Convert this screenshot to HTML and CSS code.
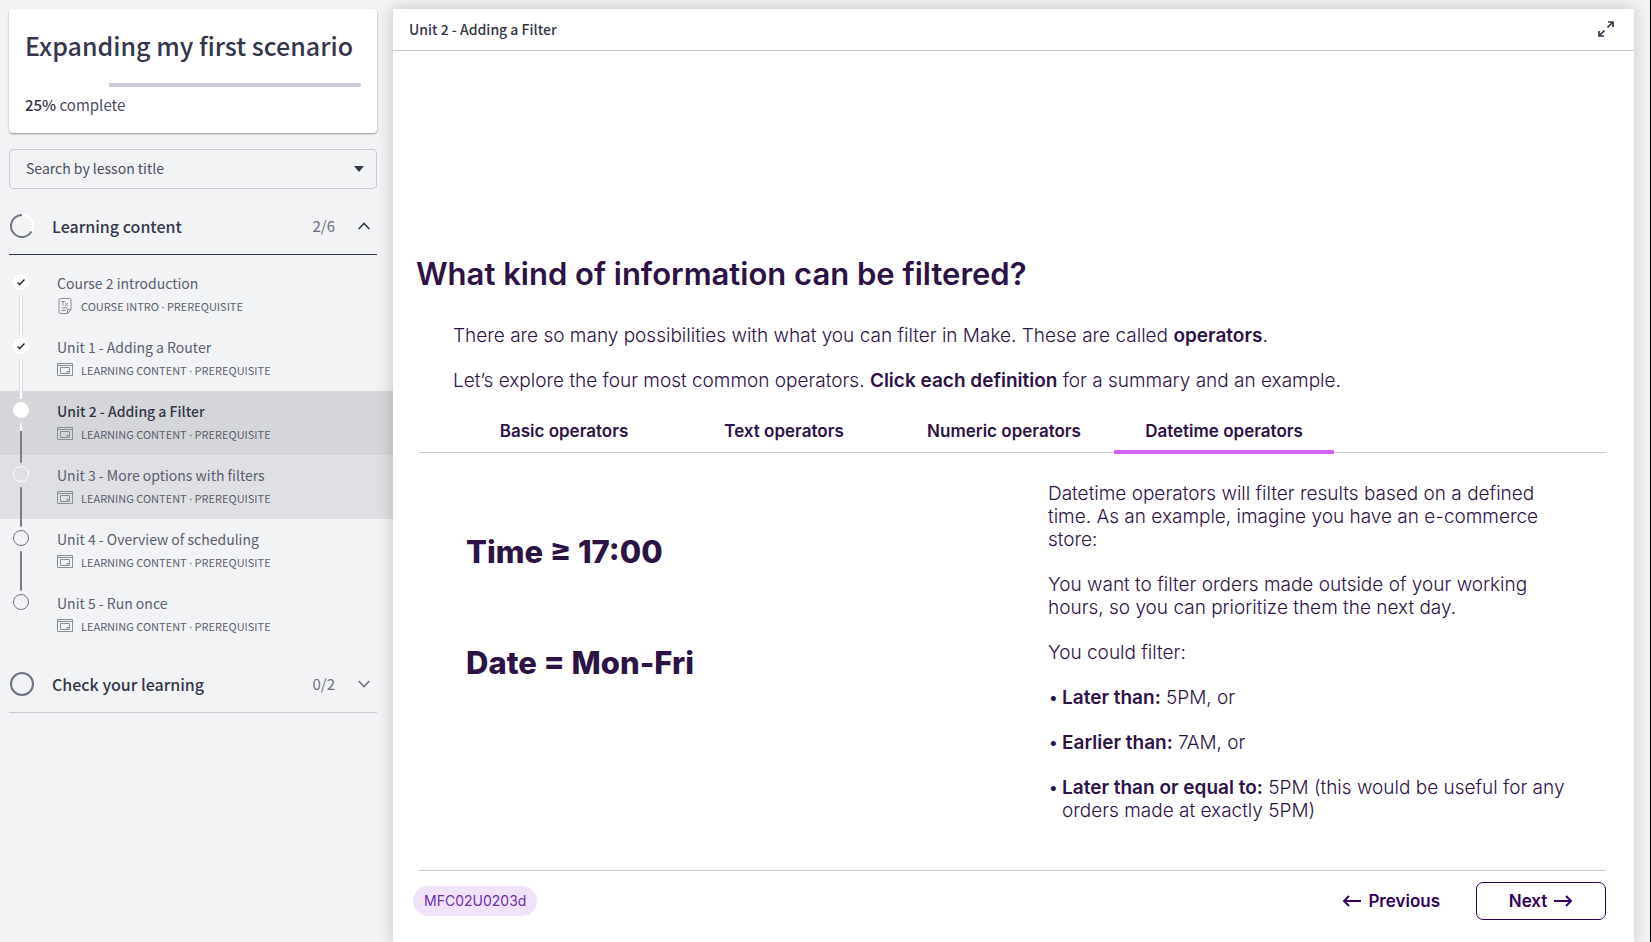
FILE: index.html
```html
<!DOCTYPE html>
<html lang="en">
<head>
<meta charset="utf-8">
<meta name="viewport" content="width=device-width, initial-scale=1">
<title>Expanding my first scenario</title>
<link rel="stylesheet" href="styles.css">
</head>
<body>
<svg class="sprite" aria-hidden="true">
  <symbol id="i-window" viewBox="0 0 16 16"><path d="M.5 1.500h15v12H.5zM.5 3.500h15M3.500 5.500h9v6h-9zM12.500 9.500h-2.500v2" fill="none" stroke="currentColor"/></symbol>
  <symbol id="i-check" viewBox="0 0 10 10"><path d="M1.500 5.500 3.700 7.500 8.500 2.500" fill="none" stroke="currentColor" stroke-width="1.400"/></symbol>
</svg>
<div class="page">
  <aside class="sidebar">
    <section class="card">
      <h1 class="card-title">Expanding my first scenario</h1>
      <div class="progress" role="progressbar" aria-valuenow="25" aria-valuemin="0" aria-valuemax="100" aria-label="Course progress"><div class="progress-done" style="width:25%"></div></div>
      <p class="card-status"><strong>25%</strong> complete</p>
    </section>

    <div class="search">
      <select class="search-select" aria-label="Search by lesson title"><option>Search by lesson title</option></select>
      <svg class="search-arrow" viewBox="0 0 10 6" aria-hidden="true"><path d="M0 0h10L5 6z" fill="currentColor"/></svg>
    </div>

    <button class="section section-open" type="button" aria-expanded="true">
      <svg class="section-ring" viewBox="0 0 24 24" aria-hidden="true"><circle cx="12" cy="12" r="11" fill="none" stroke="#fff" stroke-width="2"/><path d="M12 1A11 11 0 1 0 21.500 17.500" fill="none" stroke="#6f7083" stroke-width="2"/></svg>
      <span class="section-name">Learning content</span>
      <span class="section-count">2/6</span>
      <svg class="section-chevron" viewBox="0 0 12 8" aria-hidden="true"><path d="M.7 7 6 1.500 11.300 7" fill="none" stroke="currentColor" stroke-width="1.600"/></svg>
    </button>

    <ul class="lessons">
      <li><a class="lesson lesson-done" href="#">
        <span class="rail"><span class="dot"><svg class="tick"><use href="#i-check"/></svg></span><span class="link"></span></span>
        <span class="lesson-body"><span class="lesson-title">Course 2 introduction</span>
        <span class="lesson-meta"><svg class="meta-icon" viewBox="0 0 16 16" aria-hidden="true"><path d="M3.500.5h9a1.500 1.500 0 0 1 1.500 1.500v9.500l-3.500 4H3.500A1.500 1.500 0 0 1 2 14V2A1.500 1.500 0 0 1 3.500.5zM14 11.500h-3.500v4M4 3.500h4M6 3.500v4M8 5l3 3M11 5 8 8M4.500 10h6M4.500 12.500h4" fill="none" stroke="currentColor"/></svg><span>COURSE INTRO <span class="sep">·</span> PREREQUISITE</span></span></span>
      </a></li>
      <li><a class="lesson lesson-done" href="#">
        <span class="rail"><span class="dot"><svg class="tick"><use href="#i-check"/></svg></span><span class="link"></span></span>
        <span class="lesson-body"><span class="lesson-title">Unit 1 - Adding a Router</span>
        <span class="lesson-meta"><svg class="meta-icon"><use href="#i-window"/></svg><span>LEARNING CONTENT <span class="sep">·</span> PREREQUISITE</span></span></span>
      </a></li>
      <li><a class="lesson lesson-current" href="#" aria-current="page">
        <span class="rail"><span class="dot"></span><span class="link link-started"></span></span>
        <span class="lesson-body"><span class="lesson-title">Unit 2 - Adding a Filter</span>
        <span class="lesson-meta"><svg class="meta-icon"><use href="#i-window"/></svg><span>LEARNING CONTENT <span class="sep">·</span> PREREQUISITE</span></span></span>
      </a></li>
      <li><a class="lesson lesson-hover" href="#">
        <span class="rail"><span class="dot"></span><span class="link"></span></span>
        <span class="lesson-body"><span class="lesson-title">Unit 3 - More options with filters</span>
        <span class="lesson-meta"><svg class="meta-icon"><use href="#i-window"/></svg><span>LEARNING CONTENT <span class="sep">·</span> PREREQUISITE</span></span></span>
      </a></li>
      <li><a class="lesson" href="#">
        <span class="rail"><span class="dot"></span><span class="link"></span></span>
        <span class="lesson-body"><span class="lesson-title">Unit 4 - Overview of scheduling</span>
        <span class="lesson-meta"><svg class="meta-icon"><use href="#i-window"/></svg><span>LEARNING CONTENT <span class="sep">·</span> PREREQUISITE</span></span></span>
      </a></li>
      <li><a class="lesson" href="#">
        <span class="rail"><span class="dot"></span></span>
        <span class="lesson-body"><span class="lesson-title">Unit 5 - Run once</span>
        <span class="lesson-meta"><svg class="meta-icon"><use href="#i-window"/></svg><span>LEARNING CONTENT <span class="sep">·</span> PREREQUISITE</span></span></span>
      </a></li>
    </ul>

    <button class="section" type="button" aria-expanded="false">
      <svg class="section-ring" viewBox="0 0 24 24" aria-hidden="true"><circle cx="12" cy="12" r="11" fill="none" stroke="#6f7083" stroke-width="2"/></svg>
      <span class="section-name">Check your learning</span>
      <span class="section-count">0/2</span>
      <svg class="section-chevron" viewBox="0 0 12 8" aria-hidden="true"><path d="M.7 1 6 6.500 11.300 1" fill="none" stroke="#6f7083" stroke-width="1.600"/></svg>
    </button>
  </aside>

  <main class="viewer">
    <header class="viewer-bar">
      <span class="viewer-name">Unit 2 - Adding a Filter</span>
      <button class="expand" type="button" aria-label="Full screen"><svg class="expand-icon" viewBox="0 0 16 16" aria-hidden="true"><path d="M9.500 6.500 15 1M10 1h5v5M6.500 9.500 1 15M1 10v5h5" fill="none" stroke="currentColor" stroke-width="1.700"/></svg></button>
    </header>
    <article class="slide">
      <h2 class="slide-title">What kind of information can be filtered?</h2>
      <div class="intro">
        <p>There are so many possibilities with what you can filter in Make. These are called <strong>operators</strong>.</p>
        <p>Let’s explore the four most common operators. <strong>Click each definition</strong> for a summary and an example.</p>
      </div>
      <div class="tabs" role="tablist">
        <button class="tab" role="tab" type="button" aria-selected="false">Basic operators</button>
        <button class="tab" role="tab" type="button" aria-selected="false">Text operators</button>
        <button class="tab" role="tab" type="button" aria-selected="false">Numeric operators</button>
        <button class="tab tab-active" role="tab" type="button" aria-selected="true">Datetime operators</button>
      </div>
      <div class="panel" role="tabpanel">
        <div class="formulas">
          <p>Time ≥ 17:00</p>
          <p>Date = Mon-Fri</p>
        </div>
        <div class="explain">
          <p>Datetime operators will filter results based on a defined time. As an example, imagine you have an e-commerce store:</p>
          <p>You want to filter orders made outside of your working hours, so you can prioritize them the next day.</p>
          <p>You could filter:</p>
          <ul class="bullets">
            <li><p><strong>Later than:</strong> 5PM, or</p></li>
            <li><p><strong>Earlier than:</strong> 7AM, or</p></li>
            <li><p><strong>Later than or equal to:</strong> 5PM (this would be useful for any orders made at exactly 5PM)</p></li>
          </ul>
        </div>
      </div>
      <footer class="slide-foot">
        <span class="code">MFC02U0203d</span>
        <button class="nav-button" type="button"><svg class="arrow" viewBox="0 0 20 12" aria-hidden="true"><path d="M19 6H2M7 1 2 6l5 5" fill="none" stroke="currentColor" stroke-width="1.900"/></svg>Previous</button>
        <button class="nav-button nav-next" type="button">Next<svg class="arrow" viewBox="0 0 20 12" aria-hidden="true"><path d="M1 6h17M13 1l5 5-5 5" fill="none" stroke="currentColor" stroke-width="1.900"/></svg></button>
      </footer>
    </article>
  </main>
</div>
</body>
</html>
```
FILE: styles.css
```css
:root {
  --ink: #34364a;
  --muted: #6f7083;
  --line: #c9cad8;
  --plum: #2d1246;
  --rule: #d3c9c9;
  --ui: "Source Sans Pro", "Noto Sans CJK SC", "Noto Sans", sans-serif;
}
* { box-sizing: border-box; }
body {
  margin: 0;
  background: #f1f3f5;
  border-right: 1px solid #000;
  color: var(--ink);
  font-family: var(--ui);
}
p, h1, h2, ul { margin: 0; padding: 0; }
ul { list-style: none; }
button { background: none; border: 0; padding: 0; color: inherit; cursor: pointer; }
.sprite { display: none; }
.page {
  display: grid;
  grid-template-columns: 393px minmax(0, 1fr);
  min-height: 100vh;
  padding-right: 16px;
}

/* Sidebar */
.sidebar { padding-top: 9px; }
.card {
  margin: 0 16px 16px 9px;
  padding: 18px 16px 17px;
  background: #fff;
  border-radius: 4px;
  box-shadow: 0 1px 2px rgba(0, 0, 0, .4);
}
.card-title { font-size: 25px; font-weight: 500; line-height: 36px; white-space: nowrap; }
.progress { height: 4px; margin: 20px 0 7px; background: var(--line); border-radius: 2px; }
.progress-done { height: 100%; background: #fff; }
.card-status { color: #4b4d60; font-size: 15px; line-height: 22px; }
.card-status strong { color: var(--ink); font-weight: 500; }
.search { position: relative; margin: 0 16px 16px 9px; }
.search-select {
  display: block;
  appearance: none;
  width: 100%;
  height: 40px;
  padding: 0 16px 2px;
  background: transparent;
  border: 1px solid var(--line);
  border-radius: 4px;
  color: #4b4d60;
  font-family: var(--ui);
  font-size: 14px;
}
.search-arrow { position: absolute; top: 17px; right: 13px; width: 10px; height: 6px; }
.section {
  display: flex;
  align-items: center;
  width: calc(100% - 25px);
  height: 50px;
  margin-left: 9px;
  padding: 0 7px 8px 1px;
  border-bottom: 1px solid var(--line);
  font-family: var(--ui);
  font-size: 16px;
  font-weight: 500;
}
.section-open { border-bottom-color: var(--ink); }
.section-ring { width: 24px; height: 24px; margin-right: 18px; }
.section-name { flex: 1; text-align: left; }
.section-count { margin-right: 23px; color: var(--muted); font-size: 15px; font-weight: 400; }
.section-chevron { width: 12px; height: 8px; }
.lessons { padding: 8px 0 16px; }
.lesson {
  display: flex;
  height: 64px;
  padding: 0 16px 0 13px;
  color: #5b5d70;
  text-decoration: none;
}
.lesson-current { background: #d5d6da; }
.lesson-current .lesson-title { color: var(--ink); font-weight: 500; }
.lesson-hover { background: #dfe0e4; }
.rail { display: flex; flex-direction: column; align-items: center; gap: 5px; width: 16px; margin-right: 28px; padding-top: 11px; }
.dot { display: flex; flex: none; align-items: center; justify-content: center; width: 16px; height: 16px; border: 1px solid var(--muted); border-radius: 50%; }
.lesson-done .dot, .lesson-current .dot { background: #fff; border-color: #fff; color: #222; }
.lesson-hover .dot { border-color: #fff; }
.tick { width: 10px; height: 10px; }
.link { position: relative; flex: none; width: 2px; height: 40px; background: #7b7c8e; border-radius: 1px; }
.lesson-done .link { width: 4px; background: #fff; border: solid #d9dade; border-width: 0 1px; }
.link-started { background: linear-gradient(#fff 8px, #7b7c8e 8px); }
.lesson-body { display: flex; flex-direction: column; padding-top: 8px; }
.lesson-title { font-size: 14px; line-height: 24px; white-space: nowrap; }
.lesson-meta { display: flex; align-items: center; gap: 8px; font-size: 11px; line-height: 22px; white-space: nowrap; }
.sep { font-family: "Noto Sans", sans-serif; line-height: 1; }
.meta-icon { width: 16px; height: 16px; color: #8b8c9c; }

/* Viewer */
.viewer {
  display: flex;
  flex-direction: column;
  position: relative;
  margin-top: 9px;
  background: #fff;
  box-shadow: 0 0 16px rgba(0, 0, 0, .2);
}
.viewer-bar {
  display: flex;
  align-items: center;
  justify-content: space-between;
  height: 42px;
  padding: 0 20px 2px 16px;
  border-bottom: 1px solid var(--line);
}
.viewer-name { font-size: 14px; font-weight: 500; }
.expand-icon { display: block; width: 16px; height: 16px; }
.slide {
  display: flex;
  flex: 1;
  flex-direction: column;
  padding: 203px 28px 20px 26px;
  color: var(--plum);
  font-family: Inter, "Liberation Sans", sans-serif;
}
.slide-title { margin-left: -3px; font-size: 31px; font-weight: 600; line-height: 40px; }
.intro { display: grid; gap: 22px; padding: 30px 0 0 34px; font-size: 19px; line-height: 23px; font-weight: 300; }
.slide strong { font-weight: 600; }
.tabs { display: flex; margin-top: 18px; padding-left: 35px; border-bottom: 1px solid var(--rule); }
.tab {
  flex: 0 1 220px;
  height: 44px;
  margin-bottom: -2px;
  padding-top: 2px;
  border-bottom: 4px solid transparent;
  font-family: inherit;
  font-size: 17px;
  font-weight: 600;
}
.tab-active { border-bottom-color: #d664f5; }
.panel { display: grid; grid-template-columns: 629px minmax(0, 1fr); padding-top: 29px; }
.formulas { display: grid; align-content: start; gap: 71px; padding: 50px 0 0 47px; font-size: 31px; font-weight: 800; line-height: 40px; }
.explain { display: grid; gap: 22px; padding-right: 34px; font-size: 19px; font-weight: 300; line-height: 23px; }
.bullets { display: grid; gap: 22px; }
.bullets li { display: grid; grid-template-columns: 14px minmax(0, 1fr); }
.bullets li::before { content: "•"; }
.slide-foot { display: flex; align-items: center; margin-top: 48px; padding-top: 11px; border-top: 1px solid var(--rule); }
.code { margin: 0 auto 0 -6px; padding: 4px 11px; background: #f0e2fb; border-radius: 15px; color: #6f2da8; font-size: 14px; line-height: 22px; }
.nav-button { display: flex; align-items: center; gap: 6px; color: #32005c; font-family: inherit; font-size: 17px; font-weight: 600; }
.arrow { width: 20px; height: 12px; }
.nav-next { justify-content: center; width: 130px; height: 38px; margin-left: 36px; border: 1px solid #32005c; border-radius: 7px; }
```
